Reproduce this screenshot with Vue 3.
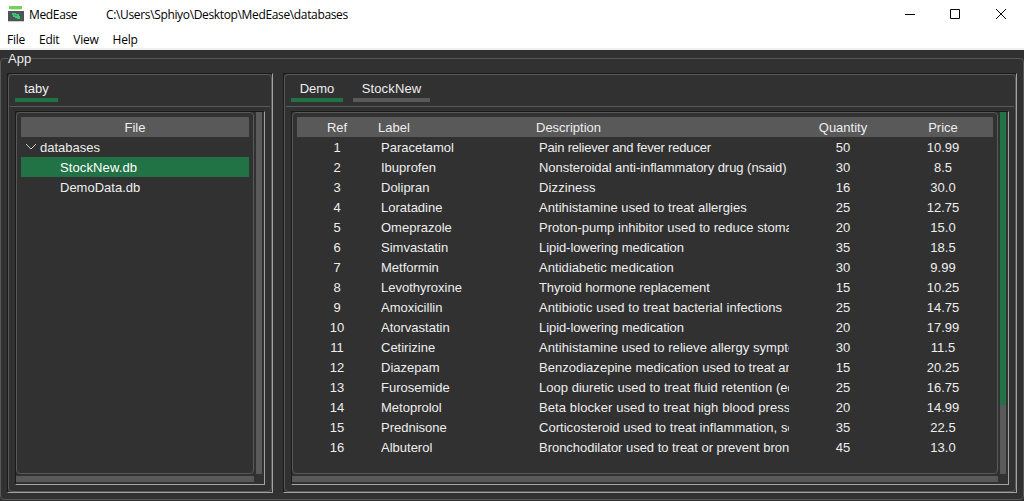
<script setup>
const menus = ['File', 'Edit', 'View', 'Help']
// The last value is the tracking of the description, in px.
const rows = [
  [1, 'Paracetamol', 'Pain reliever and fever reducer', '50', '10.99', -0.19],
  [2, 'Ibuprofen', 'Nonsteroidal anti-inflammatory drug (nsaid)', '30', '8.5', -0.04],
  [3, 'Dolipran', 'Dizziness', '16', '30.0', 0.12],
  [4, 'Loratadine', 'Antihistamine used to treat allergies', '25', '12.75', 0.05],
  [5, 'Omeprazole', 'Proton-pump inhibitor used to reduce stomach acid', '20', '15.0', 0.02],
  [6, 'Simvastatin', 'Lipid-lowering medication', '35', '18.5', -0.07],
  [7, 'Metformin', 'Antidiabetic medication', '30', '9.99', 0.05],
  [8, 'Levothyroxine', 'Thyroid hormone replacement', '15', '10.25', -0.1],
  [9, 'Amoxicillin', 'Antibiotic used to treat bacterial infections', '25', '14.75', 0.07],
  [10, 'Atorvastatin', 'Lipid-lowering medication', '20', '17.99', -0.07],
  [11, 'Cetirizine', 'Antihistamine used to relieve allergy symptoms', '30', '11.5', 0.06],
  [12, 'Diazepam', 'Benzodiazepine medication used to treat anxiety', '15', '20.25', 0.02],
  [13, 'Furosemide', 'Loop diuretic used to treat fluid retention (edema)', '25', '16.75', 0.03],
  [14, 'Metoprolol', 'Beta blocker used to treat high blood pressure', '20', '14.99', 0.1],
  [15, 'Prednisone', 'Corticosteroid used to treat inflammation, severe allergies', '35', '22.5', 0.03],
  [16, 'Albuterol', 'Bronchodilator used to treat or prevent bronchospasm', '45', '13.0', -0.03],
]
</script>

<template>
  <div class="window">
    <header class="titlebar">
      <svg class="logo" width="16" height="16" viewBox="0 0 16 16" shape-rendering="crispEdges">
        <rect x="1" y="0" width="13" height="3" fill="#76d154" />
        <rect x="2" y="3" width="11" height="1" fill="#d8dedb" />
        <rect x="0" y="5" width="16" height="10" fill="#4f5355" />
        <rect x="0" y="15" width="16" height="1" fill="#c9cccd" />
        <path d="M4 7h4v1h3v2h1v3h-3v-1h-2v-1h-2v-2h-1z" fill="#3fc878" />
        <path d="M6 8h1v1h2v1h-2z" fill="#2a9d78" />
      </svg>
      <span class="name">MedEase</span>
      <span class="path">C:\Users\Sphiyo\Desktop\MedEase\databases</span>
      <svg class="controls" width="104" height="12" viewBox="0 0 104 12" fill="none" stroke="#000">
        <path d="M2 6.500h10M47.500 1.500h9v9h-9z" />
        <path d="M93 1l10 10M103 1l-10 10" />
      </svg>
    </header>
    <nav class="menu"><span v-for="m in menus" :key="m">{{ m }}</span></nav>
    <fieldset class="app">
      <legend>App</legend>
      <section class="panel side">
        <div class="border">
          <div class="tabs"><div class="tab active">taby</div></div>
          <div class="sunken">
            <div class="tree">
              <div class="head file">File</div>
              <div class="node">
                <svg width="12" height="8" viewBox="0 0 12 8" fill="none" stroke="#c8c8c8"><path d="M1 1l5 5 5-5" /></svg>
                <span>databases</span>
              </div>
              <div class="leaf selected">StockNew.db</div>
              <div class="leaf">DemoData.db</div>
            </div>
            <div class="vbar"></div>
            <div class="hbar"></div>
          </div>
        </div>
      </section>
      <section class="panel main">
        <div class="border">
          <div class="tabs">
            <div class="tab active demo">Demo</div>
            <div class="tab stock">StockNew</div>
          </div>
          <div class="sunken">
            <div class="tree">
              <div class="head row">
                <span>Ref</span><span>Label</span><span>Description</span><span>Quantity</span><span>Price</span>
              </div>
              <div v-for="r in rows" :key="r[0]" class="row">
                <span>{{ r[0] }}</span>
                <span>{{ r[1] }}</span>
                <span :style="{ letterSpacing: r[5] + 'px' }">{{ r[2] }}</span>
                <span>{{ r[3] }}</span>
                <span>{{ r[4] }}</span>
              </div>
            </div>
            <div class="vbar"><div class="thumb"></div></div>
            <div class="hbar"></div>
          </div>
        </div>
      </section>
    </fieldset>
  </div>
</template>

<style>
body { margin: 0; background: #313131; }
</style>

<style scoped>
* { box-sizing: border-box; }
.window {
  width: 1024px; height: 501px; overflow: hidden; display: flex; flex-direction: column;
  background: #313131; color: #eee; white-space: nowrap; cursor: default;
  font: 13px/21px "Liberation Sans", Arial, sans-serif;
}
.titlebar {
  height: 30px; flex: none; display: flex; align-items: center; background: #fff; color: #000;
  padding: 0 17px 2px 8px; font: 12px/16px "Open Sans", "Noto Sans", sans-serif; letter-spacing: -.35px;
}
.titlebar span { padding-top: 2px; }
.name { width: 77px; margin-left: 5px; }
.controls { margin-left: auto; }
.menu {
  height: 20px; flex: none; display: flex; background: #fff; color: #000; border-bottom: 2px solid #f0f0f0;
  padding-left: 7px; gap: 14px; font: 12px/20px "Open Sans", "Noto Sans", sans-serif; letter-spacing: -.25px;
}
.app {
  position: relative; flex: none; margin: 0; min-width: 0; width: 1024px; height: 450px;
  border: 0; padding: 23px 7px 8px; display: flex; gap: 10px;
}
.app::before {
  content: ""; position: absolute; inset: 8px 0 1px; border: 1px solid #595959; border-radius: 4px;
}
.app legend {
  position: absolute; left: 8px; top: 0; padding: 0; line-height: 17px; background: #313131;
}
.panel {
  height: 420px; border: 1px solid; border-color: #1b1b1b #a3a3a3 #a3a3a3 #1b1b1b;
}
.side { width: 266px; }
.main { width: 734px; }
.border {
  height: 418px; border: 1px solid #595959; border-radius: 4px; padding: 0 6px;
}
.tabs {
  height: 32px; display: flex; gap: 10px; margin: 0 -5px; padding: 4px 5px 0; border-bottom: 1px solid #595959;
}
.tab { width: 43px; height: 23px; border-bottom: 4px solid #595959; text-align: center; line-height: 20px; }
.tab.active { border-color: #217346; }
.tab.demo { width: 52px; }
.tab.stock { width: 77px; letter-spacing: .15px; }
.sunken {
  display: grid; grid-template-columns: 1fr 6px; grid-template-rows: 362px 6px; gap: 2px;
  height: 374px; margin-top: 4px; padding: 0 2px 2px 0;
  border: 1px solid; border-color: #1b1b1b #a3a3a3 #a3a3a3 #1b1b1b;
}
.tree { border: 1px solid #595959; border-radius: 4px; padding: 4px; min-width: 0; }
.vbar, .hbar { background: #595959; }
.thumb { height: 293px; background: #217346; }
.head { height: 20px; background: #595959; }
.file { text-align: center; }
.node, .leaf { height: 20px; }
.node { display: flex; align-items: center; padding-left: 4px; gap: 3px; }
.node span { height: 20px; }
.leaf { padding-left: 39px; }
.selected { background: #217346; color: #fff; letter-spacing: .12px; }
.row { display: grid; grid-template-columns: 80px 158px 258px 100px 100px; height: 20px; }
.row span { height: 20px; overflow: hidden; margin: 0 4px; text-align: center; }
.row span:nth-child(2), .row span:nth-child(3) { text-align: left; }
.head.row span { margin: 0 1px; }
</style>
